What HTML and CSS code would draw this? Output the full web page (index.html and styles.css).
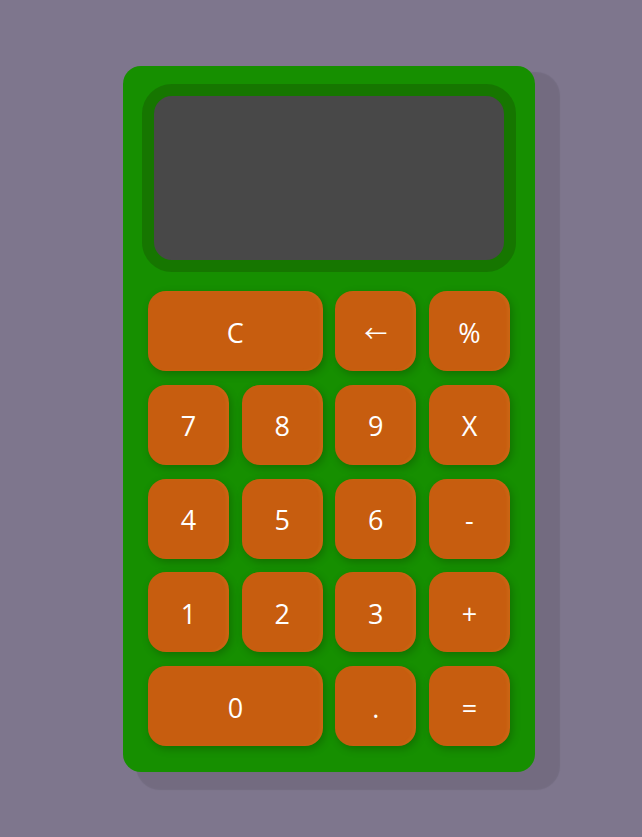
FILE: index.html
```html
<!DOCTYPE html>
<html lang="en">
<head>
<meta charset="utf-8">
<title>Calculator</title>
<link rel="stylesheet" href="styles.css">
</head>
<body>
  <div class="calculator">
    <div class="display"><div class="screen"></div></div>
    <div class="keys">
      <button class="key wide">C</button>
      <button class="key arrow">←</button>
      <button class="key">%</button>
      <button class="key">7</button>
      <button class="key">8</button>
      <button class="key">9</button>
      <button class="key">X</button>
      <button class="key">4</button>
      <button class="key">5</button>
      <button class="key">6</button>
      <button class="key">-</button>
      <button class="key">1</button>
      <button class="key">2</button>
      <button class="key">3</button>
      <button class="key">+</button>
      <button class="key wide">0</button>
      <button class="key">.</button>
      <button class="key">=</button>
    </div>
  </div>
</body>
</html>
```

FILE: styles.css
```css
html, body {
  margin: 0;
  height: 100%;
}
body {
  background: #7e768d;
  padding: 66px 0 0 123px;
  box-sizing: border-box;
  font-family: "Open Sans", "Noto Sans", sans-serif;
}
.calculator {
  width: 412px;
  height: 706px;
  box-sizing: border-box;
  background: #168f00;
  border-radius: 18px;
  padding: 18px 25px 26px;
  box-shadow: 19px 12px 1px 6px rgba(0, 0, 0, 0.085);
  display: flex;
  flex-direction: column;
}
.display {
  margin: 0 -6px;
  height: 188px;
  box-sizing: border-box;
  border: 12px solid #167600;
  border-radius: 30px;
  background: #484848;
}
.screen {
  height: 100%;
  border-radius: 20px;
}
.keys {
  margin-top: 19px;
  display: grid;
  grid-template-columns: repeat(4, 1fr);
  grid-template-rows: repeat(5, 80px);
  column-gap: 12.5px;
  row-gap: 13.75px;
}
.key {
  border: none;
  margin: 0;
  padding: 2px 0 0;
  background: #c75d0f;
  color: #ffffff;
  font-family: "Open Sans", "Noto Sans", sans-serif;
  font-size: 27px;
  border-radius: 18px;
  box-shadow: 2px 3px 8px rgba(0, 0, 0, 0.22), inset -3px 0 3px rgba(255, 200, 80, 0.08);
  display: flex;
  align-items: center;
  justify-content: center;
}
.key.arrow {
  font-family: "Noto Sans CJK JP", sans-serif;
  font-size: 23px;
}
.key.wide {
  grid-column: span 2;
}
```
